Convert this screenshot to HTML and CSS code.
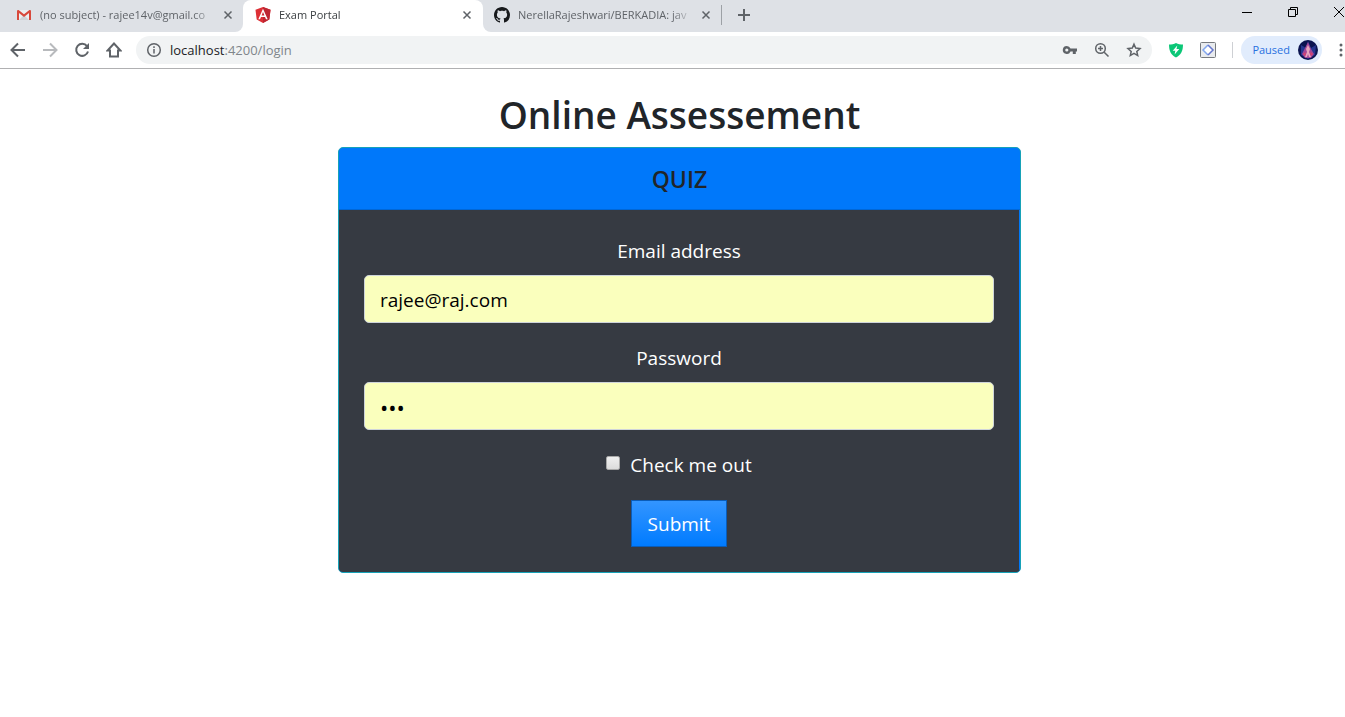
FILE: index.html
```html
<!DOCTYPE html>
<html lang="en">
<head>
<meta charset="utf-8">
<meta name="viewport" content="width=device-width, initial-scale=1">
<title>Exam Portal</title>
<link rel="stylesheet" href="styles.css">
</head>
<body>
<header class="browser">
  <div class="tab-strip">
    <div class="tab tab-first">
      <svg class="favicon" viewBox="0 0 16 16"><path fill="#eceff1" d="M2 3h12v10H2z"/><path fill="#cfd4d8" d="M3 13l5-5 5 5z"/><path fill="#d8493c" d="M1 4v8.500q0 .5.5.5H3V6l5 4 5-4v7h1.500q.5 0 .5-.5V4q0-1-1-1h-.600L8 7.300 2.600 3H2Q1 3 1 4z"/></svg>
      <span class="tab-title">(no subject) - rajee14v@gmail.co</span>
      <button class="tab-close" aria-label="Close tab"><svg viewBox="0 0 10 10"><path d="M1.500 1.500l7 7m0-7l-7 7"/></svg></button>
    </div>
    <div class="tab tab-active">
      <svg class="favicon" viewBox="0 0 16 16"><path fill="#dd2f35" d="M8 0l7.500 2.700-1.200 9.800L8 16l-6.300-3.500L.5 2.700z"/><path fill="#bd2733" d="M8 0l7.500 2.700-1.200 9.800L8 16z"/><path fill="#fff" fill-rule="evenodd" d="M8 1.800l4.700 10.500H11L10 9.900H6l-1 2.400H3.300zM8 5.100L6.600 8.500h2.800z"/></svg>
      <span class="tab-title">Exam Portal</span>
      <button class="tab-close" aria-label="Close tab"><svg viewBox="0 0 10 10"><path d="M1.500 1.500l7 7m0-7l-7 7"/></svg></button>
    </div>
    <div class="tab tab-last">
      <svg class="favicon" viewBox="0 0 16 16"><path fill="#17191c" d="M8 0C3.580 0 0 3.580 0 8c0 3.540 2.290 6.530 5.470 7.590.4.070.55-.17.55-.38 0-.19-.01-.82-.01-1.490-2.010.37-2.530-.49-2.690-.94-.09-.23-.48-.94-.82-1.130-.28-.15-.68-.52-.01-.53.63-.01 1.080.58 1.230.82.72 1.210 1.870.87 2.330.66.07-.52.28-.87.51-1.070-1.780-.2-3.640-.89-3.640-3.950 0-.87.31-1.590.82-2.150-.08-.2-.36-1.020.08-2.120 0 0 .67-.21 2.200.82.64-.18 1.320-.27 2-.27s1.360.09 2 .27c1.530-1.040 2.200-.82 2.200-.82.44 1.100.16 1.920.08 2.120.51.56.82 1.270.82 2.150 0 3.070-1.870 3.750-3.650 3.950.29.25.54.73.54 1.480 0 1.070-.01 1.930-.01 2.200 0 .21.15.46.55.38A8.010 8.010 0 0 0 16 8c0-4.420-3.580-8-8-8z"/></svg>
      <span class="tab-title">NerellaRajeshwari/BERKADIA: jav</span>
      <button class="tab-close" aria-label="Close tab"><svg viewBox="0 0 10 10"><path d="M1.500 1.500l7 7m0-7l-7 7"/></svg></button>
    </div>
    <button class="new-tab" aria-label="New tab"><svg viewBox="0 0 14 14"><path d="M7 1v12M1 7h12"/></svg></button>
    <div class="window-controls">
      <button aria-label="Minimize"><svg viewBox="0 0 12 12"><path d="M1 6.500h10"/></svg></button>
      <button aria-label="Restore"><svg viewBox="0 0 12 12"><path d="M1.500 3.500h7v7h-7zM3.500 3.500v-2h7v7h-2"/></svg></button>
      <button aria-label="Close"><svg viewBox="0 0 12 12"><path d="M1 1l10 10M11 1L1 11"/></svg></button>
    </div>
  </div>
  <div class="toolbar">
    <nav class="nav-buttons" aria-label="Browser">
      <button aria-label="Back"><svg viewBox="0 0 16 16"><path d="M15 8H2m6-6.500L1.500 8 8 14.500"/></svg></button>
      <button class="disabled" aria-label="Forward"><svg viewBox="0 0 16 16"><path d="M1 8h13M8 1.500L14.500 8 8 14.500"/></svg></button>
      <button aria-label="Reload"><svg viewBox="0 0 16 16"><path d="M13 4.200A6 6 0 1 0 14 9.500"/><path class="solid" d="M15 1v6H9z"/></svg></button>
      <button aria-label="Home"><svg viewBox="0 0 16 16"><path d="M8 1.500L1.500 8.500H4v6h8v-6h2.500z"/></svg></button>
    </nav>
    <div class="address">
      <svg viewBox="0 0 16 16"><circle cx="8" cy="8" r="6.300"/><path d="M8 7v4.500M8 4.300v1.600"/></svg>
      <span class="url"><span class="host">localhost</span>:4200/login</span>
      <button aria-label="Passwords"><svg viewBox="0 0 16 16"><path class="solid" fill-rule="evenodd" d="M4.800 4a4 4 0 0 1 3.700 2.500H15v3h-1.200V12h-3V9.500H8.500A4 4 0 1 1 4.800 4zm0 2.400a1.600 1.600 0 1 0 0 3.200 1.600 1.600 0 0 0 0-3.200z"/></svg></button>
      <button aria-label="Zoom"><svg class="fine" viewBox="0 0 16 16"><circle cx="6.500" cy="6.500" r="4.800"/><path d="M10.200 10.200l4.300 4.300M6.500 4v5M4 6.500h5"/></svg></button>
      <button aria-label="Bookmark"><svg class="fine" viewBox="0 0 16 16"><path d="M8 2.200l1.700 3.900 4.300.4-3.200 2.900.9 4.200L8 11.400l-3.700 2.200.9-4.200L2 6.500l4.300-.4z"/></svg></button>
    </div>
    <div class="extensions">
      <button aria-label="Shield"><svg viewBox="0 0 16 16"><path fill="#0bc777" stroke="none" d="M8 1c2 1.500 4.500 1.500 7 1.500C15 9 13 13 8 15.500 3 13 1 9 1 2.500 3.500 2.500 6 2.500 8 1z"/><path fill="#fff" stroke="none" d="M9.300 3.500L4.700 8.800h2.600l-.7 3.800 4.700-5.500H8.500z"/></svg></button>
      <button aria-label="Extension"><svg viewBox="0 0 16 16"><rect x=".5" y=".5" width="15" height="15" rx="1" fill="#e9ebee" stroke="#777a7e" stroke-width="1"/><path fill="#fff" stroke="none" d="M8 3l5 5-5 5-5-5z"/><path stroke="#83a7ee" stroke-width="1.500" d="M8 3L3 8l5 5"/><path stroke="#6676cd" stroke-width="1.500" d="M8 3l5 5-5 5"/></svg></button>
    </div>
    <button class="profile">Paused
      <svg viewBox="0 0 20 20"><circle cx="10" cy="10" r="10" fill="#0b1450"/><path fill="#25358f" d="M3 5l5 3 2-7 3 7 5-3-1 10-7 4-7-4z"/><path fill="#a04698" d="M10 2l3 7 3 5-3 4H7l-3-4 3-6z"/><path fill="#e8a6bc" d="M10 5l2 4-1 3 2 5h-2l-1-3-1 3H7l2-5-1-3z"/><path fill="#db4267" d="M5 14l3-2-1 4zm10 0l-3-2 1 4z"/></svg>
    </button>
    <button class="menu" aria-label="Menu"><svg viewBox="0 0 8 16"><circle cx="4" cy="3" r="1.500"/><circle cx="4" cy="8" r="1.500"/><circle cx="4" cy="13" r="1.500"/></svg></button>
  </div>
</header>
<main class="page">
  <h1 class="page-title">Online Assessement</h1>
  <section class="card">
    <h2 class="card-header">QUIZ</h2>
    <form class="card-body">
      <div class="field">
        <label for="email">Email address</label>
        <input class="control" id="email" type="email" value="rajee@raj.com">
      </div>
      <div class="field">
        <label for="password">Password</label>
        <input class="control control-password" id="password" type="password" value="raj">
      </div>
      <div class="check">
        <input id="check" type="checkbox">
        <label for="check">Check me out</label>
      </div>
      <button class="submit" type="submit">Submit</button>
    </form>
  </section>
</main>
</body>
</html>
```
FILE: styles.css
```css
* { box-sizing: border-box; }

body {
  margin: 0;
  background: #fff;
  color: #212529;
  font-family: "Segoe UI", "Open Sans", "Noto Sans", sans-serif;
  font-size: 19px;
  line-height: 30px;
}

button { font: inherit; }

.browser {
  border-bottom: 1px solid #b0b0b2;
  font-size: 11px;
  line-height: 16px;
  overflow: hidden;
}

.browser button {
  display: flex;
  align-items: center;
  padding: 0;
  border: 0;
  background: none;
  color: #5f6368;
}

.browser svg {
  flex: none;
  width: 16px;
  height: 16px;
  fill: none;
  stroke: #5f6368;
  stroke-width: 2;
}

.browser svg.favicon { stroke: none; }
.browser svg.fine { stroke-width: 1.5; }
.browser svg .solid { fill: #5f6368; stroke: none; }

.tab-strip {
  display: flex;
  height: 32px;
  background: #fff;
}

.tab {
  display: flex;
  align-items: center;
  gap: 8px;
  width: 240px;
  padding: 0 10px 2px 12px;
  background: #dee1e6;
  color: #5f6368;
}

.tab-first { width: 243px; padding-left: 16px; border-bottom-right-radius: 8px; }
.tab-active {
  padding-right: 11px;
  background: #fff;
  color: #3c4043;
  border-radius: 8px 8px 0 0;
  box-shadow: 0 -8px 0 #dee1e6;
}
.tab-last { width: 238px; padding-left: 11px; border-bottom-left-radius: 8px; }

.tab-title {
  flex: 1;
  overflow: hidden;
  white-space: nowrap;
  mask-image: linear-gradient(to right, #000 88%, transparent);
}

.browser .tab-close svg { width: 10px; height: 10px; stroke-width: 1.5; }

.browser .new-tab {
  position: relative;
  padding: 0 16px 2px;
  background: #dee1e6;
}
.new-tab::before {
  content: "";
  position: absolute;
  left: 0;
  top: 5px;
  width: 1px;
  height: 20px;
  background: #9da1a6;
}
.browser .new-tab svg { width: 14px; height: 14px; }

.window-controls {
  flex: 1;
  display: flex;
  justify-content: flex-end;
  gap: 34px;
  padding-bottom: 8px;
  background: #dee1e6;
}
.browser .window-controls svg { width: 12px; height: 12px; stroke: #000; stroke-width: 1; }

.toolbar {
  display: flex;
  align-items: center;
  height: 36px;
  padding-left: 10px;
}

.nav-buttons { display: flex; gap: 16px; margin-right: 14px; }
.browser .disabled svg { stroke: #b8babd; }

.address {
  flex: 1;
  display: flex;
  align-items: center;
  gap: 16px;
  height: 28px;
  padding: 0 10px;
  border-radius: 14px;
  background: #f1f3f4;
}
.browser .address > svg { stroke-width: 1.5; }
.url { flex: 1; margin-left: -8px; font-size: 13px; color: #80868b; }
.host { color: #202124; }

.extensions {
  display: flex;
  gap: 16px;
  margin-left: 16px;
  padding-right: 16px;
  border-right: 1px solid #ced0d4;
}

.browser .profile {
  gap: 8px;
  height: 28px;
  margin: 0 15px 0 8px;
  padding: 0 4px 0 11px;
  border-radius: 14px;
  background: #e1ecfc;
  color: #2870df;
}
.browser .profile svg { width: 20px; height: 20px; stroke: none; }
.browser .menu svg { width: 8px; fill: #5f6368; stroke: none; }

.page {
  padding: 22px 0 24px 14px;
  text-align: center;
}

.page-title {
  margin: 0 0 8px;
  font-size: 37px;
  font-weight: 600;
  line-height: 48px;
}

.card {
  max-width: 683px;
  margin: 0 auto;
  border: 1px solid #17a2b8;
  border-radius: 5px;
  background: #0078fa;
  overflow: hidden;
}

.card-header {
  margin: 0;
  padding: 16px 24px 15px;
  border-bottom: 1px solid #0067d7;
  font-size: 23px;
  font-weight: 600;
  line-height: 30px;
}

.card-body {
  padding: 26px 25px 25px;
  border-right: 1px solid #0078fa;
  background: #363a42;
  color: #fff;
}

.field { margin-bottom: 20px; }
.field label { display: block; margin-bottom: 9px; }

.control {
  display: block;
  width: 100%;
  height: 48px;
  padding: 8px 15px 6px;
  border: 1px solid #ced4da;
  border-radius: 5px;
  background: #faffbd;
  color: #000;
  font: inherit;
}

.control-password { font-size: 22px; }

.check {
  display: flex;
  justify-content: center;
  align-items: flex-start;
  gap: 10px;
  margin-bottom: 20px;
}

.check input {
  appearance: none;
  width: 14px;
  height: 14px;
  margin: 6px 0 0;
  border: 1px solid #a8a8a8;
  border-radius: 2px;
  background: linear-gradient(#efefef, #dcdcdc);
}

.submit {
  height: 47px;
  padding: 7px 16px;
  border: 1px solid #0a5cb8;
  background: linear-gradient(#3395ff, #007bff);
  color: #fff;
}
```
